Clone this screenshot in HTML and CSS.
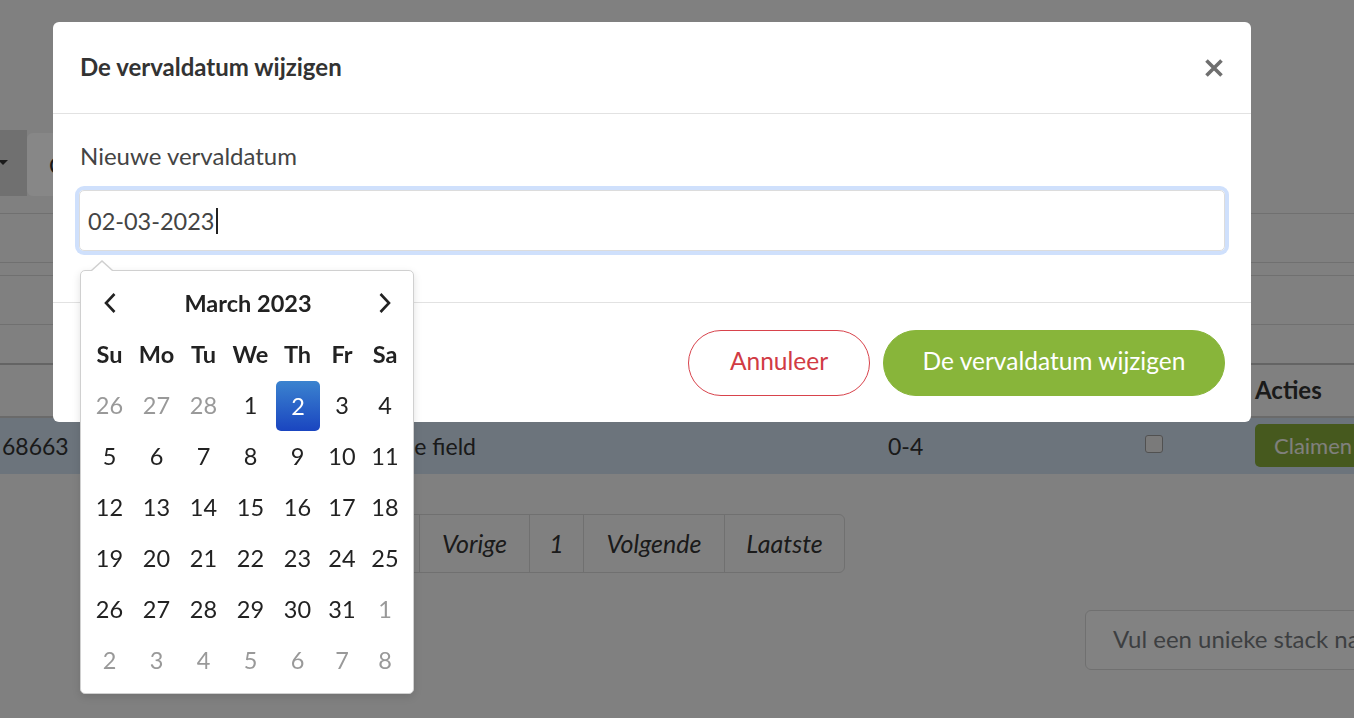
FILE: index.html
```html
<!DOCTYPE html>
<html lang="nl">
<head>
<meta charset="utf-8">
<title>De vervaldatum wijzigen</title>
<link rel="stylesheet" href="styles.css">
</head>
<body>
<div class="page">
  <div class="toolbar">
    <div class="tb-drop"><span class="caret"></span></div>
    <div class="tb-btn">Claim</div>
  </div>
  <div class="table">
    <div class="trow r1"></div>
    <div class="trow r2"></div>
    <div class="trow r3"></div>
    <div class="trow r4"></div>
    <div class="thead">
      <div class="c-acties">Acties</div>
    </div>
    <div class="tdata">
      <div class="c-id">68663</div>
      <div class="c-name">Free field</div>
      <div class="c-range">0-4</div>
      <div class="c-check"><span class="checkbox"></span></div>
      <div class="c-act"><span class="claim">Claimen</span></div>
    </div>
  </div>
  <div class="pager">
    <span class="pg">Eerste</span>
    <span class="pg">Vorige</span>
    <span class="pg">1</span>
    <span class="pg">Volgende</span>
    <span class="pg">Laatste</span>
  </div>
  <div class="stack-row">
    <div class="stack-input">Vul een unieke stack naam in</div>
  </div>
</div>

<div class="overlay"></div>

<div class="modal">
  <div class="m-head">
    <h5 class="m-title">De vervaldatum wijzigen</h5>
    <svg class="m-close" width="20" height="20" viewBox="0 0 20 20"><path d="M2.5 2.5 L17.5 17.5 M17.5 2.5 L2.5 17.5" stroke="#6f6f6f" stroke-width="3.6" stroke-linecap="butt"/></svg>
  </div>
  <div class="m-body">
    <label class="m-label">Nieuwe vervaldatum</label>
    <div class="m-input"><span>02-03-2023</span><span class="caret-bar"></span></div>
  </div>
  <div class="m-foot">
    <button class="btn btn-cancel">Annuleer</button>
    <button class="btn btn-ok">De vervaldatum wijzigen</button>
  </div>
</div>

<div class="picker">
  <div class="dp-grid">
    <div class="dp-nav"><svg width="14" height="22" viewBox="0 0 14 22"><path d="M11.5 2 L3 11 L11.5 20" fill="none" stroke="#222" stroke-width="2.6"/></svg></div>
    <div class="dp-title">March 2023</div>
    <div class="dp-nav"><svg width="14" height="22" viewBox="0 0 14 22"><path d="M2.5 2 L11 11 L2.5 20" fill="none" stroke="#222" stroke-width="2.6"/></svg></div>

    <div class="dow">Su</div><div class="dow">Mo</div><div class="dow">Tu</div><div class="dow">We</div><div class="dow">Th</div><div class="dow">Fr</div><div class="dow">Sa</div>

    <div class="day old">26</div><div class="day old">27</div><div class="day old">28</div><div class="day">1</div><div class="day active">2</div><div class="day">3</div><div class="day">4</div>
    <div class="day">5</div><div class="day">6</div><div class="day">7</div><div class="day">8</div><div class="day">9</div><div class="day">10</div><div class="day">11</div>
    <div class="day">12</div><div class="day">13</div><div class="day">14</div><div class="day">15</div><div class="day">16</div><div class="day">17</div><div class="day">18</div>
    <div class="day">19</div><div class="day">20</div><div class="day">21</div><div class="day">22</div><div class="day">23</div><div class="day">24</div><div class="day">25</div>
    <div class="day">26</div><div class="day">27</div><div class="day">28</div><div class="day">29</div><div class="day">30</div><div class="day">31</div><div class="day new">1</div>
    <div class="day new">2</div><div class="day new">3</div><div class="day new">4</div><div class="day new">5</div><div class="day new">6</div><div class="day new">7</div><div class="day new">8</div>
  </div>
</div>
</body>
</html>
```
FILE: styles.css
```css
* { box-sizing: border-box; }
html, body { margin: 0; padding: 0; }
body {
  width: 1354px;
  height: 718px;
  overflow: hidden;
  background: #f2f2f2;
  font-family: Lato, "Noto Sans", sans-serif;
  color: #313131;
  position: relative;
}

/* ---------- background page ---------- */
.page { padding-top: 130px; }
.toolbar { display: flex; height: 66px; }
.tb-drop { width: 27px; background: #d3d3d3; position: relative; }
.caret {
  position: absolute; left: -2px; top: 30px;
  border-left: 5px solid transparent; border-right: 5px solid transparent;
  border-top: 5px solid #333;
}
.tb-btn {
  margin-top: 3px; width: 120px; height: 63px; background: #fff;
  border-radius: 6px; padding: 18px 22px; font-size: 23px;
}
.table { margin-top: 17px; }
.trow { border-top: 1px solid #d3d3d3; }
.r1 { height: 49px; }
.r2 { height: 13px; }
.r3 { height: 49px; }
.r4 { height: 39px; }
.thead {
  height: 55px; border-top: 2px solid #bdbdbd; border-bottom: 2px solid #c8c8c8;
  display: flex; align-items: center; padding-left: 1255px; padding-bottom: 3px;
  font-weight: 700; font-size: 24px;
}
.tdata {
  height: 56px; background: #ccdbea; display: flex; align-items: center;
  font-size: 23px;
}
.tdata > div { flex-shrink: 0; }
.c-id { width: 300px; padding-left: 2px; }
.c-name { width: 176px; text-align: right; }
.c-range { margin-left: 412px; width: 257px; }
.c-check { width: 110px; display: flex; align-items: center; }
.checkbox {
  display: block; width: 18px; height: 18px; border: 1px solid #9a9a9a;
  border-radius: 3px; background: #e6e6e6; margin-top: -4px;
}
.c-act { width: 120px; }
.claim {
  display: inline-flex; align-items: center; background: #84a93a; color: #f2f2ea;
  padding: 0 19px; border-radius: 5px; height: 43px; font-size: 22px; margin-top: -2px;
}
.pager {
  margin-top: 40px; margin-left: 308px; display: inline-flex;
  border: 1px solid #d3d3d3; border-radius: 6px; height: 59px;
  font-style: italic; font-size: 25px; color: #333;
}
.pg {
  display: flex; align-items: center; justify-content: center;
  border-left: 1px solid #d3d3d3; padding-bottom: 2px;
}
.pg:first-child { border-left: 0; width: 110px; }
.pg:nth-child(2) { width: 110px; }
.pg:nth-child(3) { width: 54px; }
.pg:nth-child(4) { width: 141px; }
.pg:nth-child(5) { width: 120px; }
.stack-row { margin-top: 37px; padding-left: 1085px; }
.stack-input {
  width: 400px; height: 60px; border: 1px solid #d3d3d3; border-radius: 6px;
  background: #f6f6f6; padding: 13px 27px; font-size: 24px; color: #74787c;
  white-space: nowrap; overflow: hidden;
}

/* ---------- overlay ---------- */
.overlay { position: fixed; inset: 0; background: rgba(0,0,0,0.47); }

/* ---------- modal ---------- */
.modal {
  position: absolute; left: 53px; top: 22px; width: 1198px;
  background: #fff; border-radius: 6px; color: #333;
}
.m-head {
  height: 92px; border-bottom: 1px solid #e2e2e2; padding: 0 27px 3px;
  display: flex; align-items: center; justify-content: space-between;
}
.m-title { margin: 0; font-size: 24px; font-weight: 700; color: #333; }
.m-close { display: block; margin-top: 4px; }
.m-body { padding: 27px 26px 51px 27px; }
.m-label { display: block; font-size: 24px; line-height: 30px; color: #444; margin-bottom: 19px; }
.m-input {
  height: 61px; margin-left: -1px; border: 1px solid #dcdcdc; border-radius: 5px;
  box-shadow: 0 0 0 4px #cfe0fc; padding: 0 8px; display: flex; align-items: center;
  font-size: 23.5px; color: #444;
}
.caret-bar { display: inline-block; width: 2px; height: 26px; background: #222; margin-left: 1px; }
.m-foot {
  border-top: 1px solid #e2e2e2; padding: 27px 26px 26px; display: flex;
  justify-content: flex-end; gap: 13px;
}
.btn {
  height: 66px; border-radius: 33px; font-family: inherit; font-size: 24.5px;
  cursor: pointer; padding: 0 0 5px;
}
.btn-cancel { width: 182px; background: #fff; border: 1px solid #d8434c; color: #d13b44; }
.btn-ok { width: 342px; background: #88b53a; border: 1px solid #88b53a; color: #fff; }

/* ---------- datepicker ---------- */
.picker {
  position: absolute; left: 80px; top: 270px; width: 334px;
  background: #fff; border: 1px solid #d0d0d0; border-radius: 5px;
  padding: 6px 7px 8px 5px; box-shadow: 0 3px 8px rgba(0,0,0,0.12);
  color: #222; font-size: 23.5px;
}
.picker::before {
  content: ""; position: absolute; left: 10px; top: -11px;
  border-left: 11px solid transparent; border-right: 11px solid transparent;
  border-bottom: 10px solid #d0d0d0;
}
.picker::after {
  content: ""; position: absolute; left: 11px; top: -9px;
  border-left: 10px solid transparent; border-right: 10px solid transparent;
  border-bottom: 9px solid #fff;
}
.dp-grid {
  display: grid;
  grid-template-columns: 47px 47px 47px 47px 47px 42px 44px;
  grid-auto-rows: 51px;
}
.dp-nav { display: flex; align-items: center; justify-content: center; }
.dp-title {
  grid-column: span 5; display: flex; align-items: center; justify-content: center;
  font-weight: 700;
}
.dow, .day { display: flex; align-items: center; justify-content: center; }
.dow { font-weight: 700; }
.day.old, .day.new { color: #999; }
.day.active {
  margin: 2px 1px -1px 2px; border-radius: 5px; color: #fff;
  background: linear-gradient(to bottom, #3b83cf, #1a45c0);
}
```
